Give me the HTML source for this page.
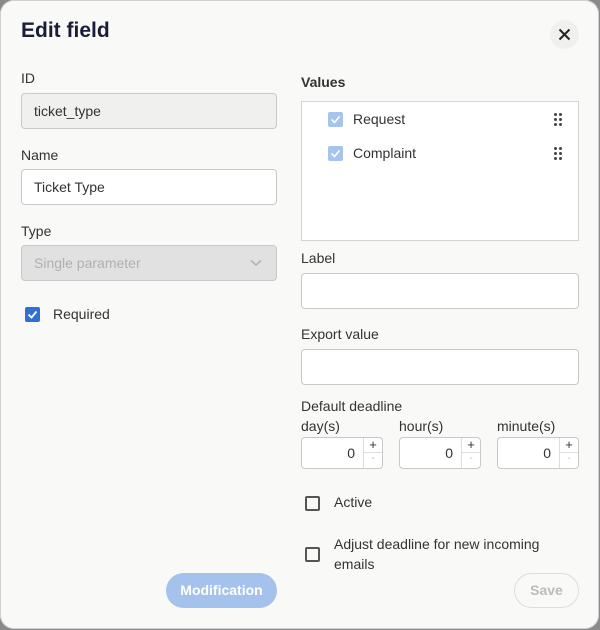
<!DOCTYPE html>
<html><head><style>
*{box-sizing:border-box;margin:0;padding:0}
html,body{width:600px;height:630px;background:#8a8a8a;overflow:hidden}
body{font-family:"Liberation Sans",sans-serif;color:#333;font-size:14px}
.dlg{position:absolute;left:0;top:0;width:599px;height:629px;background:#f9f9f7;border-radius:14px;box-shadow:inset 0 0 0 1px #d0d0d0}
.a{position:absolute}
h1{position:absolute;left:21px;top:19px;font-size:21px;font-weight:bold;color:#1a1c3a}
.lbl{position:absolute;font-size:14px;color:#333}
.inp{position:absolute;border:1px solid #c8c8c8;border-radius:4px;background:#fff;height:36px;font-size:14px;padding:0 12px;line-height:34px;color:#333}
.cb{position:absolute;width:15px;height:15px;border-radius:2px}
.num{position:absolute;top:437px;width:82px;height:32px;border:1px solid #c8c8c8;border-radius:4px;background:#fff}
.num .v{position:absolute;right:27px;top:7px;font-size:14px}
.num .sp{position:absolute;right:0;top:0;width:19px;height:30px;border-left:1px solid #ddd}
.num .p{position:absolute;left:0;top:0;width:18px;height:15px;border-bottom:1px solid #ddd;text-align:center;font-size:13px;line-height:14px;color:#333}
.num .m{position:absolute;left:0;top:15px;width:18px;text-align:center;font-size:10px;color:#bbb;line-height:12px}
.dots{position:absolute;width:8px;height:14px}
.dots i{position:absolute;width:3px;height:3px;border-radius:50%;background:#444}
</style></head><body>
<div class="dlg">
<h1>Edit field</h1>
<div class="a" style="left:550px;top:20px;width:29px;height:29px;border-radius:50%;background:#f0f0ee"></div>
<svg class="a" style="left:558px;top:28px" width="13" height="13"><path d="M1.5 1.5L11.5 11.5M11.5 1.5L1.5 11.5" stroke="#222" stroke-width="2"/></svg>

<div class="lbl" style="left:21px;top:70px">ID</div>
<div class="inp" style="left:21px;top:93px;width:256px;background:#f0f0ef">ticket_type</div>
<div class="lbl" style="left:21px;top:147px">Name</div>
<div class="inp" style="left:21px;top:169px;width:256px">Ticket Type</div>
<div class="lbl" style="left:21px;top:223px">Type</div>
<div class="inp" style="left:21px;top:245px;width:256px;background:#e1e1e1;color:#b0b0b0">Single parameter</div>
<svg class="a" style="left:250px;top:259px" width="12" height="8"><path d="M1 1.5L6 6L11 1.5" stroke="#b0b0b0" stroke-width="1.5" fill="none"/></svg>
<div class="cb" style="left:25px;top:307px;background:#2f6fd6"></div>
<svg class="a" style="left:25px;top:307px" width="15" height="15"><path d="M3.5 7.5L6.5 10.5L11.5 4.5" stroke="#fff" stroke-width="1.8" fill="none"/></svg>
<div class="lbl" style="left:53px;top:306px">Required</div>

<div class="lbl" style="left:301px;top:74px;font-weight:bold">Values</div>
<div class="a" style="left:301px;top:101px;width:278px;height:140px;border:1px solid #d4d4d4;background:#fff"></div>
<div class="cb" style="left:328px;top:112px;background:#a6c4ee"></div>
<svg class="a" style="left:328px;top:112px" width="15" height="15"><path d="M3.5 7.5L6.5 10.5L11.5 4.5" stroke="#fff" stroke-width="1.6" fill="none"/></svg>
<div class="lbl" style="left:353px;top:111px">Request</div>
<div class="cb" style="left:328px;top:146px;background:#a6c4ee"></div>
<svg class="a" style="left:328px;top:146px" width="15" height="15"><path d="M3.5 7.5L6.5 10.5L11.5 4.5" stroke="#fff" stroke-width="1.6" fill="none"/></svg>
<div class="lbl" style="left:353px;top:145px">Complaint</div>
<div class="dots" style="left:554px;top:113px"><i style="left:0;top:0"></i><i style="left:5px;top:0"></i><i style="left:0;top:5px"></i><i style="left:5px;top:5px"></i><i style="left:0;top:10px"></i><i style="left:5px;top:10px"></i></div>
<div class="dots" style="left:554px;top:147px"><i style="left:0;top:0"></i><i style="left:5px;top:0"></i><i style="left:0;top:5px"></i><i style="left:5px;top:5px"></i><i style="left:0;top:10px"></i><i style="left:5px;top:10px"></i></div>

<div class="lbl" style="left:301px;top:250px">Label</div>
<div class="inp" style="left:301px;top:273px;width:278px"></div>
<div class="lbl" style="left:301px;top:326px">Export value</div>
<div class="inp" style="left:301px;top:349px;width:278px"></div>
<div class="lbl" style="left:301px;top:398px">Default deadline</div>
<div class="lbl" style="left:301px;top:418px">day(s)</div>
<div class="lbl" style="left:399px;top:418px">hour(s)</div>
<div class="lbl" style="left:497px;top:418px">minute(s)</div>
<div class="num" style="left:301px"><span class="v">0</span><div class="sp"><div class="p">+</div><div class="m">-</div></div></div>
<div class="num" style="left:399px"><span class="v">0</span><div class="sp"><div class="p">+</div><div class="m">-</div></div></div>
<div class="num" style="left:497px"><span class="v">0</span><div class="sp"><div class="p">+</div><div class="m">-</div></div></div>

<div class="cb" style="left:305px;top:496px;border:2px solid #555"></div>
<div class="lbl" style="left:334px;top:494px">Active</div>
<div class="cb" style="left:305px;top:547px;border:2px solid #555"></div>
<div class="lbl" style="left:334px;top:534px;line-height:20px">Adjust deadline for new incoming<br>emails</div>

<div class="a" style="left:166px;top:573px;width:111px;height:35px;border-radius:18px;background:#a4c2ec;color:#fff;font-weight:bold;font-size:14px;text-align:center;line-height:35px">Modification</div>
<div class="a" style="left:514px;top:573px;width:65px;height:35px;border-radius:18px;border:1px solid #ddd;color:#bbb;font-weight:bold;font-size:14px;text-align:center;line-height:33px">Save</div>
</div>
</body></html>
